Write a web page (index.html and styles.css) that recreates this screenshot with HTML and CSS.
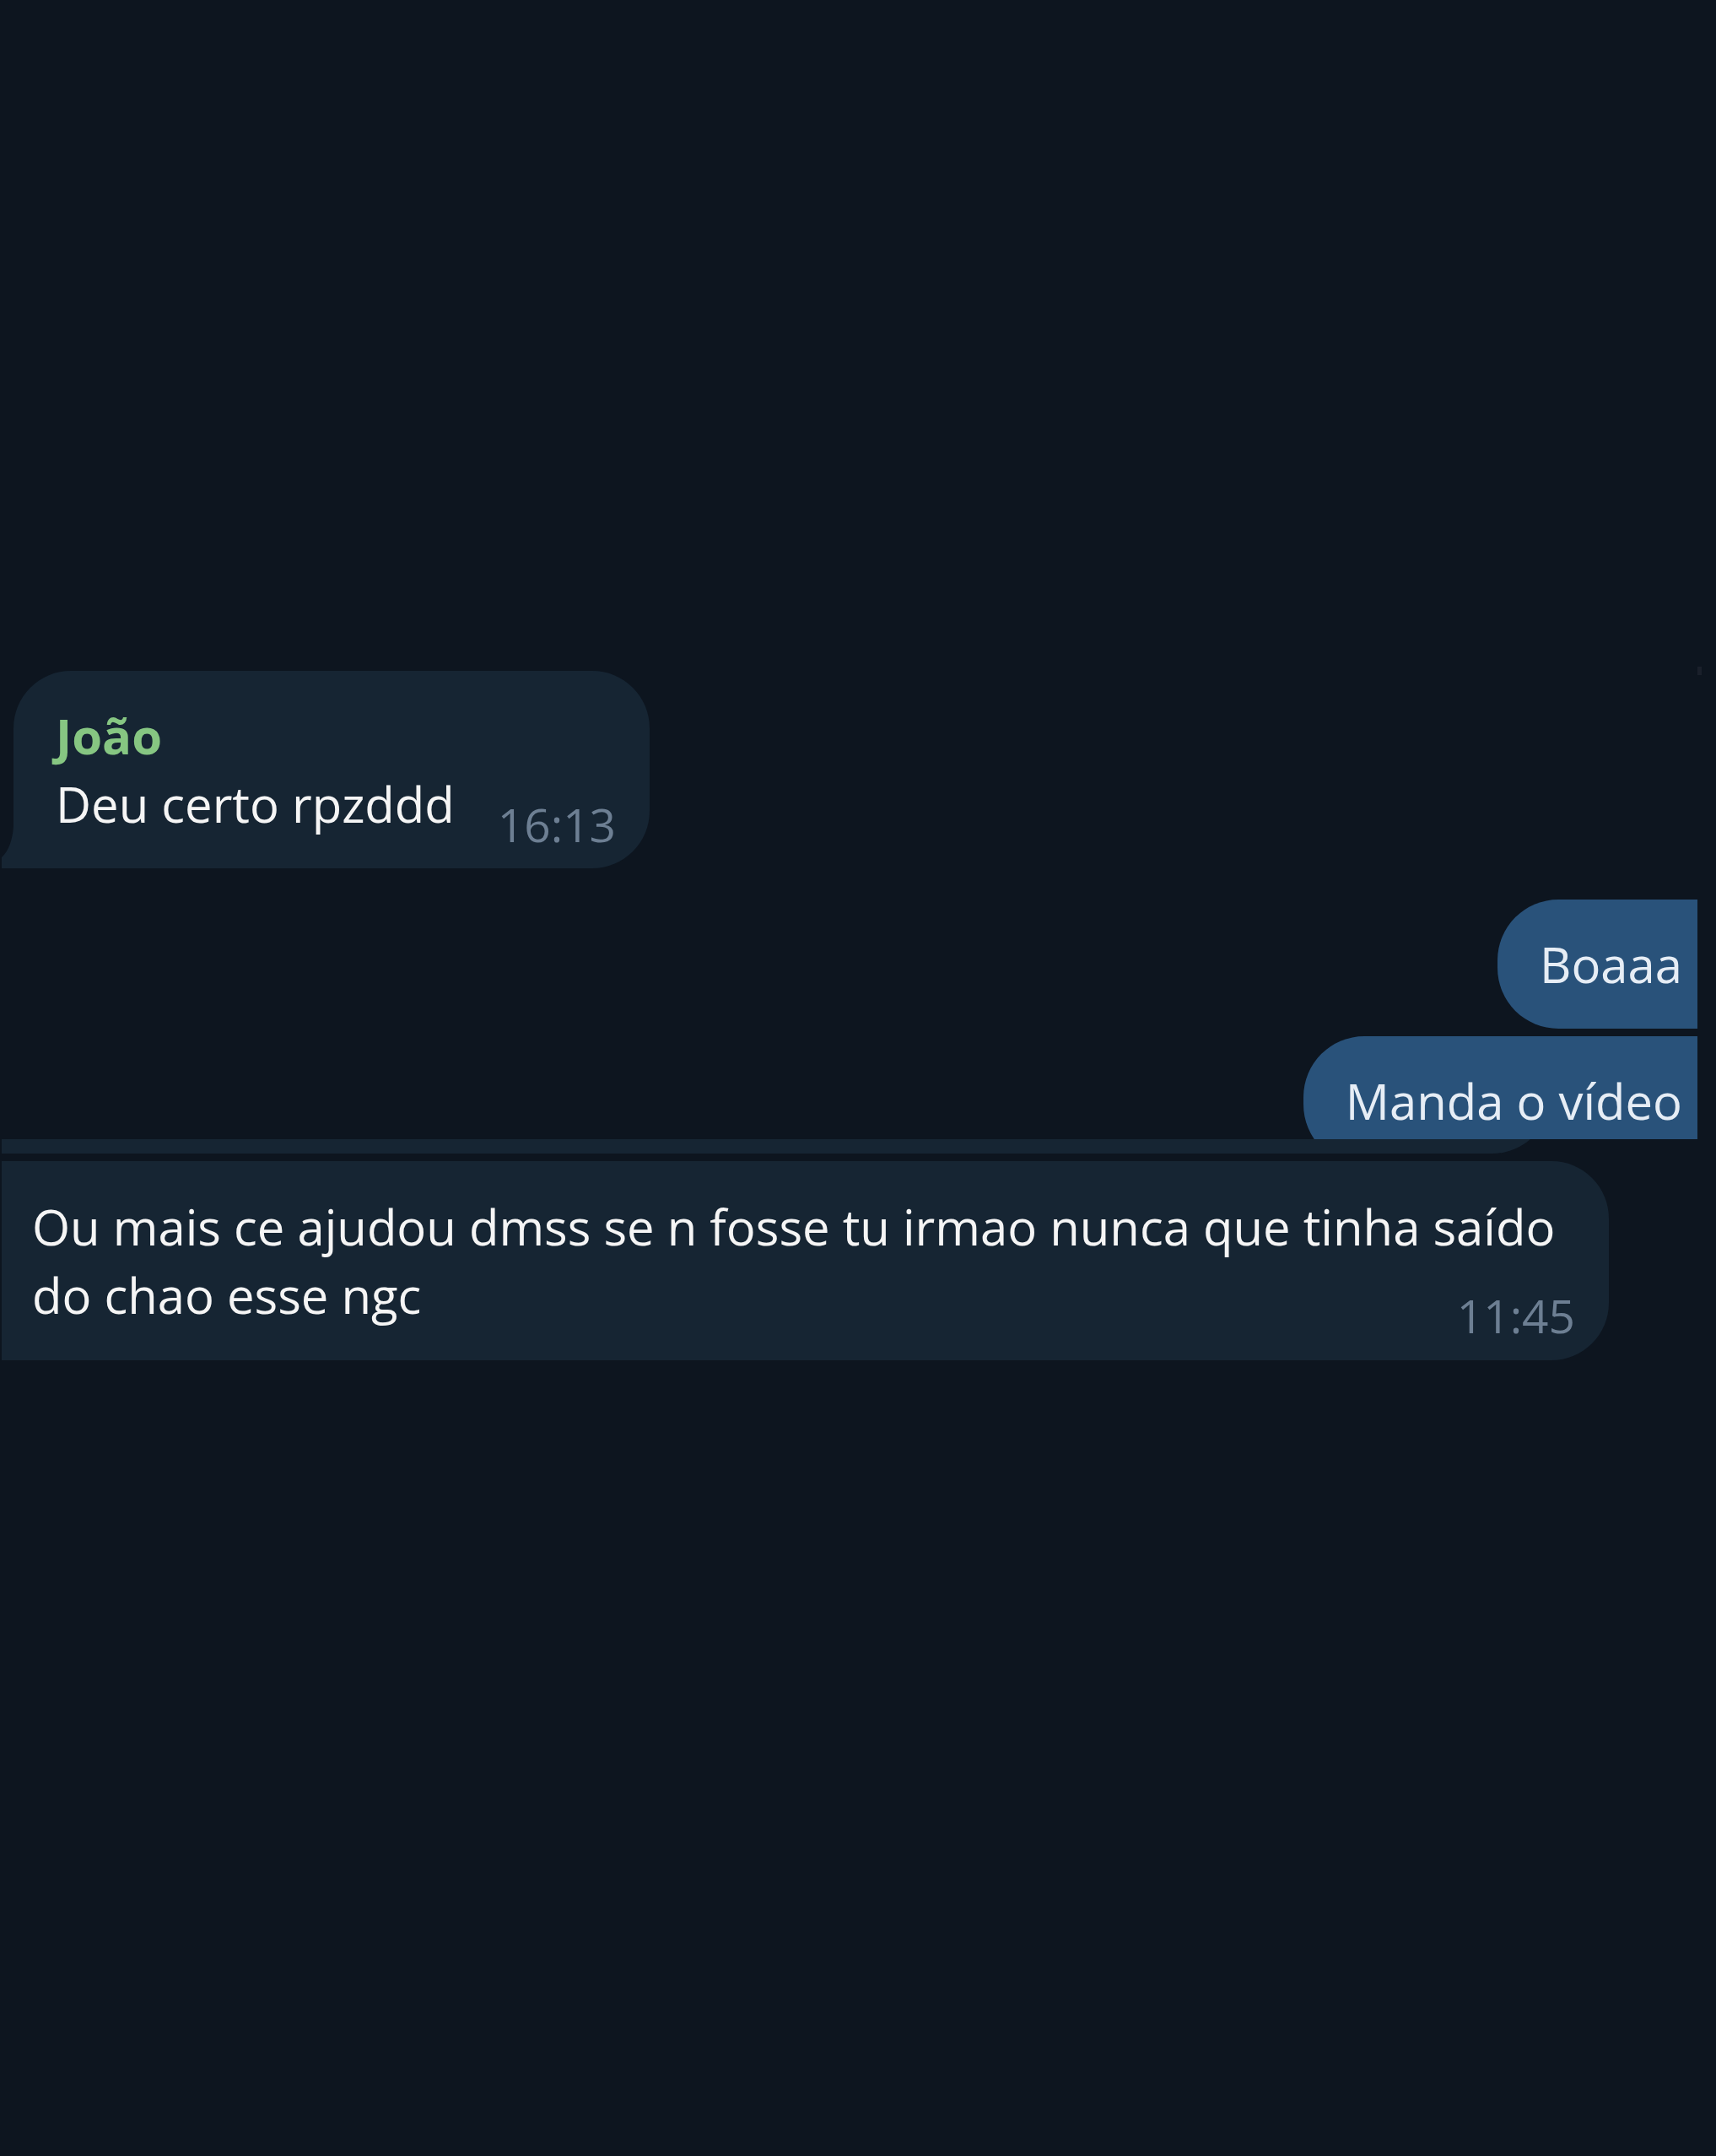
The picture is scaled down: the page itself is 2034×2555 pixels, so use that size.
FILE: index.html
```html
<!DOCTYPE html>
<html lang="pt-BR">
<head>
<meta charset="utf-8">
<meta name="viewport" content="width=device-width, initial-scale=1">
<title>João</title>
<link rel="stylesheet" href="styles.css">
</head>
<body>
<main class="chat">
  <article class="bubble incoming first">
    <svg class="tail" viewBox="0 0 14 50" aria-hidden="true"><path d="M14 0C13 16 8 30 0 37V50H14Z"/></svg>
    <h2 class="sender">João</h2>
    <div class="row">
      <p class="text">Deu certo rpzddd</p>
      <time class="time" datetime="16:13">16:13</time>
    </div>
  </article>
  <div class="replies">
    <article class="bubble outgoing"><p class="text">Boaaa</p></article>
    <div class="cut">
      <article class="bubble outgoing"><p class="text">Manda o vídeo</p></article>
    </div>
  </div>
  <div class="strip"><div class="strip-end"></div></div>
  <article class="bubble incoming long">
    <p class="text">Ou mais ce ajudou dmss se n fosse tu irmao nunca que tinha saído do chao esse ngc</p>
    <time class="time" datetime="11:45">11:45</time>
  </article>
  <span class="mark"></span>
</main>
</body>
</html>
```

FILE: styles.css
```css
* {
  box-sizing: border-box;
}

body {
  margin: 0;
  min-height: 100vh;
  background: #0d151f;
  font-family: "Open Sans", "Noto Sans", sans-serif;
  font-size: 58px;
  line-height: 81px;
}

.chat {
  position: relative;
  display: flex;
  flex-direction: column;
  align-items: flex-start;
  padding: 795px 22px 0 2px;
}

.text,
.sender {
  margin: 0;
  font-size: inherit;
}

.bubble {
  position: relative;
  padding: 36px 40px 36px 50px;
  border-radius: 68px;
}

.incoming {
  background: #162533;
  color: #f5f5f5;
}

.first {
  margin-left: 14px;
  border-bottom-left-radius: 0;
}

.sender {
  color: #86c682;
  font-weight: 700;
}

.row {
  display: flex;
  align-items: flex-end;
  gap: 51px;
}

.time {
  margin-bottom: -24px;
  color: #6d7f93;
  font-size: 55px;
}

.tail {
  position: absolute;
  right: 100%;
  bottom: 0;
  width: 14px;
  height: 50px;
  fill: #162533;
}

.replies {
  display: flex;
  flex-direction: column;
  align-items: flex-end;
  align-self: stretch;
  gap: 9px;
  margin-top: 37px;
}

.outgoing {
  padding-right: 18px;
  border-radius: 72px 0 0 72px;
  background: #29527a;
  color: #e6edf5;
}

/* The feed is cut here, part-way through a bubble. */
.cut {
  height: 122px;
  overflow: hidden;
}

.strip {
  display: flex;
  align-items: flex-end;
  width: calc(100% - 175px);
  height: 17px;
  overflow: hidden;
}

.strip-end {
  flex: 1;
  height: 136px;
  border-radius: 0 68px 68px 0;
  background: #162533;
}

.long {
  display: grid;
  max-width: calc(100% - 105px);
  margin-top: 9px;
  padding: 37px 40px 37px 36px;
  border-radius: 0 68px 68px 0;
}

.long > * {
  grid-area: 1 / 1;
}

.long .time {
  align-self: end;
  justify-self: end;
}

.mark {
  position: absolute;
  top: 790px;
  right: 17px;
  width: 5px;
  height: 10px;
  background: #1a202b;
}
```
